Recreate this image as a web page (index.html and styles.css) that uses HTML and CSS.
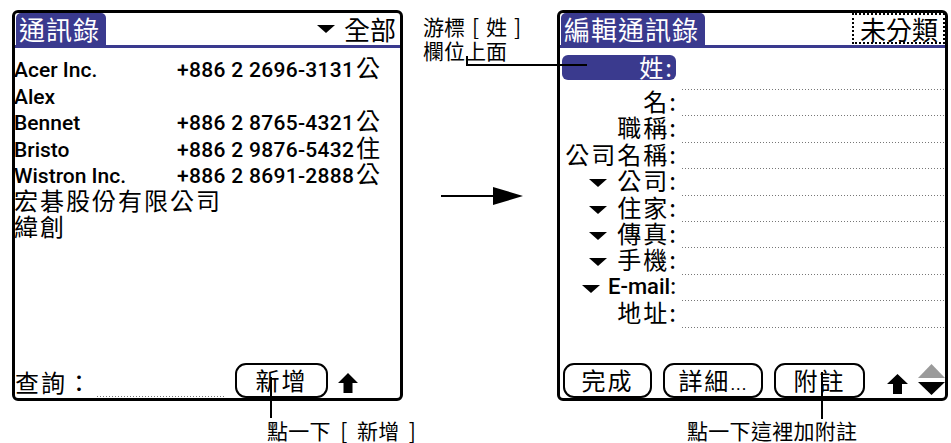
FILE: index.html
```html
<!DOCTYPE html>
<html lang="zh-Hant">
<head>
<meta charset="utf-8">
<title>通訊錄</title>
<link rel="stylesheet" href="styles.css">
</head>
<body>
<div class="page">
  <section class="col col-left">
    <div class="screen">
      <div class="titlebar">
        <div class="tab">通訊錄</div>
        <div class="cat"><span class="tri"></span>全部</div>
      </div>
      <div class="list">
        <div class="row"><span class="name">Acer Inc.</span><span class="phone">+886 2 2696-3131</span><span class="kind">公</span></div>
        <div class="row"><span class="name">Alex</span></div>
        <div class="row"><span class="name">Bennet</span><span class="phone">+886 2 8765-4321</span><span class="kind">公</span></div>
        <div class="row"><span class="name">Bristo</span><span class="phone">+886 2 9876-5432</span><span class="kind">住</span></div>
        <div class="row"><span class="name">Wistron Inc.</span><span class="phone">+886 2 8691-2888</span><span class="kind">公</span></div>
        <div class="row"><span class="name zh">宏碁股份有限公司</span></div>
        <div class="row"><span class="name zh">緯創</span></div>
      </div>
      <div class="footer footer-left">
        <span class="find-label">查詢：</span>
        <span class="find-field"></span>
        <span class="btn btn-new">新增</span>
        <svg class="up" width="20" height="20" viewBox="0 0 20 20"><path d="M10 0 L20 10 L14.5 10 L14.5 20 L5.5 20 L5.5 10 L0 10 Z" fill="#000"/></svg>
      </div>
    </div>
    <div class="caption caption-left">點一下<span class="br">[</span>新增<span class="br">]</span></div>
  </section>

  <section class="col col-mid">
    <div class="note">游標<span class="br">[</span>姓<span class="br">]</span><br>欄位上面</div>
    <svg class="arrow" width="82" height="20" viewBox="0 0 82 20"><line x1="0" y1="10" x2="54" y2="10" stroke="#000" stroke-width="2"/><path d="M52 1 L82 10 L52 19 Z" fill="#000"/></svg>
  </section>

  <section class="col col-right">
    <div class="screen">
      <div class="titlebar">
        <div class="tab tab-edit">編輯通訊錄</div>
        <div class="catbox">未分類</div>
      </div>
      <div class="form">
        <div class="label sel">姓:</div><div class="field"></div>
        <div class="label">名:</div><div class="field"></div>
        <div class="label">職稱:</div><div class="field"></div>
        <div class="label">公司名稱:</div><div class="field"></div>
        <div class="label"><span class="tri tri-label"></span>公司:</div><div class="field"></div>
        <div class="label"><span class="tri tri-label"></span>住家:</div><div class="field"></div>
        <div class="label"><span class="tri tri-label"></span>傳真:</div><div class="field"></div>
        <div class="label"><span class="tri tri-label"></span>手機:</div><div class="field"></div>
        <div class="label"><span class="tri tri-label tri-mail"></span><span class="en">E-mail:</span></div><div class="field"></div>
        <div class="label">地址:</div><div class="field"></div>
      </div>
      <div class="footer footer-right">
        <span class="btn btn-done">完成</span>
        <span class="btn btn-detail">詳細<span class="dots">...</span></span>
        <span class="btn btn-note">附註</span>
        <svg class="up up-right" width="21" height="20" viewBox="0 0 21 20"><path d="M10.5 0 L21 10 L15 10 L15 20 L6 20 L6 10 L0 10 Z" fill="#000"/></svg>
        <svg class="scroll" width="27" height="33" viewBox="0 0 27 33"><path d="M13.5 0 L27 14 L0 14 Z" fill="#9a9a9a"/><path d="M0 18 L27 18 L13.5 31 Z" fill="#000"/></svg>
      </div>
    </div>
    <div class="caption caption-right">點一下這裡加附註</div>
  </section>

  <div class="callout callout-new"></div>
  <div class="callout callout-note"></div>
  <div class="callout callout-elbow"></div>
</div>
</body>
</html>
```
FILE: styles.css
```css
:root {
  --purple: #3a3a8e;
  --cjk: "Noto Sans CJK TC", "Noto Sans CJK JP", sans-serif;
  --latin: Roboto, "Liberation Sans", Arial, sans-serif;
}

html, body {
  margin: 0;
  padding: 0;
  background: #fff;
}

body {
  width: 951px;
  height: 443px;
  overflow: hidden;
  font-family: var(--cjk);
  color: #000;
}

.page {
  position: relative;
  display: flex;
  align-items: flex-start;
  padding: 10px 0 0 12px;
  height: 443px;
  box-sizing: border-box;
}

.col {
  display: flex;
  flex-direction: column;
}

.col-left,
.col-right {
  width: 391px;
}

.col-mid {
  width: 154px;
}

.screen {
  width: 391px;
  height: 391px;
  box-sizing: border-box;
  border: 3px solid #000;
  border-radius: 6px;
  display: flex;
  flex-direction: column;
}

/* title bar */
.titlebar {
  display: flex;
  justify-content: space-between;
  align-items: stretch;
  height: 35px;
  box-sizing: border-box;
  border-bottom: 3px solid var(--purple);
}

.tab {
  background: var(--purple);
  color: #fff;
  font-size: 26px;
  line-height: 32px;
  letter-spacing: 1px;
  padding: 0 6px 0 3px;
  margin-left: 1px;
  border-radius: 5px 5px 0 0;
}

.cat {
  display: flex;
  align-items: center;
  font-size: 26px;
  line-height: 32px;
  padding-right: 4px;
}

.tri {
  display: block;
  width: 0;
  height: 0;
  border-left: 9px solid transparent;
  border-right: 9px solid transparent;
  border-top: 8px solid #000;
  margin-right: 9px;
}

.catbox {
  font-size: 26px;
  line-height: 27px;
  padding: 0 5px 0 6px;
  border: 2px dotted #000;
  margin-bottom: 1px;
}

/* list */
.list {
  flex: 1;
  padding-top: 9px;
}

.row {
  display: grid;
  grid-template-columns: 162px 177px auto;
  align-items: start;
  height: 26.5px;
  font: 500 21px/26.5px var(--latin);
  white-space: nowrap;
}

.name {
  margin-left: -1px;
}

.phone {
  letter-spacing: 0.3px;
}

.kind,
.zh {
  font-family: var(--cjk);
  font-weight: 400;
  font-size: 24px;
  line-height: 19.8px;
  letter-spacing: 2px;
}

.kind {
  margin-left: 2px;
}

.zh {
  grid-column: 1 / -1;
}

/* footers */
.footer {
  display: flex;
  align-items: center;
  height: 35px;
}

.find-label {
  font-size: 24px;
  line-height: 24px;
  letter-spacing: 2px;
  margin-top: 3px;
}

.find-field {
  align-self: flex-end;
  width: 128px;
  height: 1px;
  margin: 0 0 1px 4px;
  background-image: linear-gradient(to right, #777 50%, transparent 50%);
  background-size: 3px 1px;
  background-repeat: repeat-x;
}

.btn {
  box-sizing: border-box;
  height: 35px;
  border: 2px solid #000;
  border-radius: 11px;
  background: #fff;
  font-size: 24px;
  line-height: 30px;
  letter-spacing: 2px;
  text-align: center;
}

.btn-new {
  width: 93px;
  margin-left: 10px;
}

.up {
  margin-left: 10px;
  align-self: flex-end;
  margin-bottom: 5px;
}

.footer-right {
  padding-left: 3px;
  height: 35px;
}

.btn-done {
  width: 89px;
}

.btn-detail {
  width: 100px;
  margin-left: 11px;
}

.btn-note {
  width: 91px;
  margin-left: 11px;
}

.dots {
  font-family: var(--latin);
  font-size: 18px;
  letter-spacing: 1px;
}

.up-right {
  margin-left: 22px;
  margin-bottom: 4px;
}

.scroll {
  margin-left: 10px;
}

/* edit form */
.form {
  flex: 1;
  display: grid;
  grid-template-columns: 116px 263px;
  grid-template-rows: 42px repeat(9, 26.4px);
  column-gap: 6px;
  align-content: start;
}

.label {
  display: flex;
  justify-content: flex-end;
  align-items: flex-start;
  font-size: 24px;
  line-height: 22px;
  letter-spacing: 2px;
  margin-right: -2px;
  white-space: nowrap;
}

.label.sel {
  background: var(--purple);
  color: #fff;
  height: 25px;
  line-height: 24px;
  margin: 7px 0 0 2px;
  border-radius: 6px;
  padding-right: 2px;
}

.tri-label {
  margin-top: 10px;
  margin-right: 10px;
}

.tri-mail {
  margin-right: 8px;
}

.en {
  font: 500 22px/22px var(--latin);
  letter-spacing: 0;
  margin-right: 2px;
  padding-top: 1px;
}

.field {
  background-image: linear-gradient(to right, #777 50%, transparent 50%);
  background-size: 3px 1px;
  background-repeat: repeat-x;
  background-position: 0 100%;
}

/* annotations */
.br {
  display: inline-block;
  width: 26px;
  text-align: center;
}

.note {
  margin: 4px 0 0 20px;
  font-size: 21px;
  line-height: 24px;
  white-space: nowrap;
}

.note .br {
  width: 21px;
}

.arrow {
  margin: 124px 0 0 38px;
}

.caption {
  margin-top: 19px;
  font-size: 21px;
  line-height: 21px;
  letter-spacing: 0.3px;
  white-space: nowrap;
}

.caption-left {
  padding-left: 255px;
}

.caption-right {
  padding-left: 130px;
}

.callout {
  position: absolute;
  box-sizing: border-box;
}

.callout-new {
  left: 270px;
  top: 377px;
  width: 2px;
  height: 41px;
  background: #000;
}

.callout-note {
  left: 821px;
  top: 372px;
  width: 2px;
  height: 47px;
  background: #000;
}

.callout-elbow {
  left: 466px;
  top: 56px;
  width: 121px;
  height: 10px;
  border-left: 2px solid #000;
  border-bottom: 2px solid #000;
}
```
